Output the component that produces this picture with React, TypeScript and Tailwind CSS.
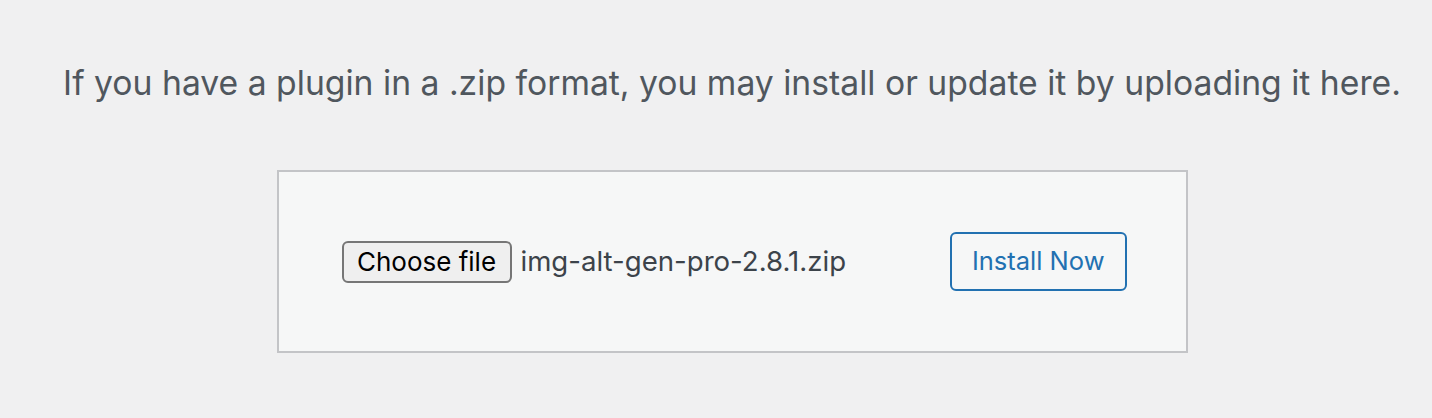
import React from 'react';

export default function App() {
  return (
    <div className="min-h-[418px] bg-[#f0f0f1] pl-[32px] flex flex-col items-center font-['Inter',_'Noto_Sans',_sans-serif]">
      <p className="pt-[59px] text-[33.7px] leading-[48px] text-[#50575e] text-center whitespace-nowrap">
        If you have a plugin in a .zip format, you may install or update it by uploading it here.
      </p>

      <form className="mt-[63px] w-[911px] h-[183px] border-2 border-[#c3c4c7] bg-[#f6f7f7] pl-[63px] pr-[59px] flex items-center justify-between">
        <div className="flex items-center">
          <button
            type="button"
            className="h-[42px] w-[170px] rounded-[6px] border-2 border-[#767676] bg-[#efefef] text-[26px] text-black flex items-center justify-center"
          >
            Choose file
          </button>
          <span className="ml-[9px] text-[27.6px] text-[#3c434a]">img-alt-gen-pro-2.8.1.zip</span>
        </div>
        <button
          type="button"
          className="h-[59px] px-[20px] rounded-[6px] border-2 border-[#2271b1] text-[25.5px] text-[#2271b1] flex items-center"
        >
          Install Now
        </button>
      </form>
    </div>
  );
}
